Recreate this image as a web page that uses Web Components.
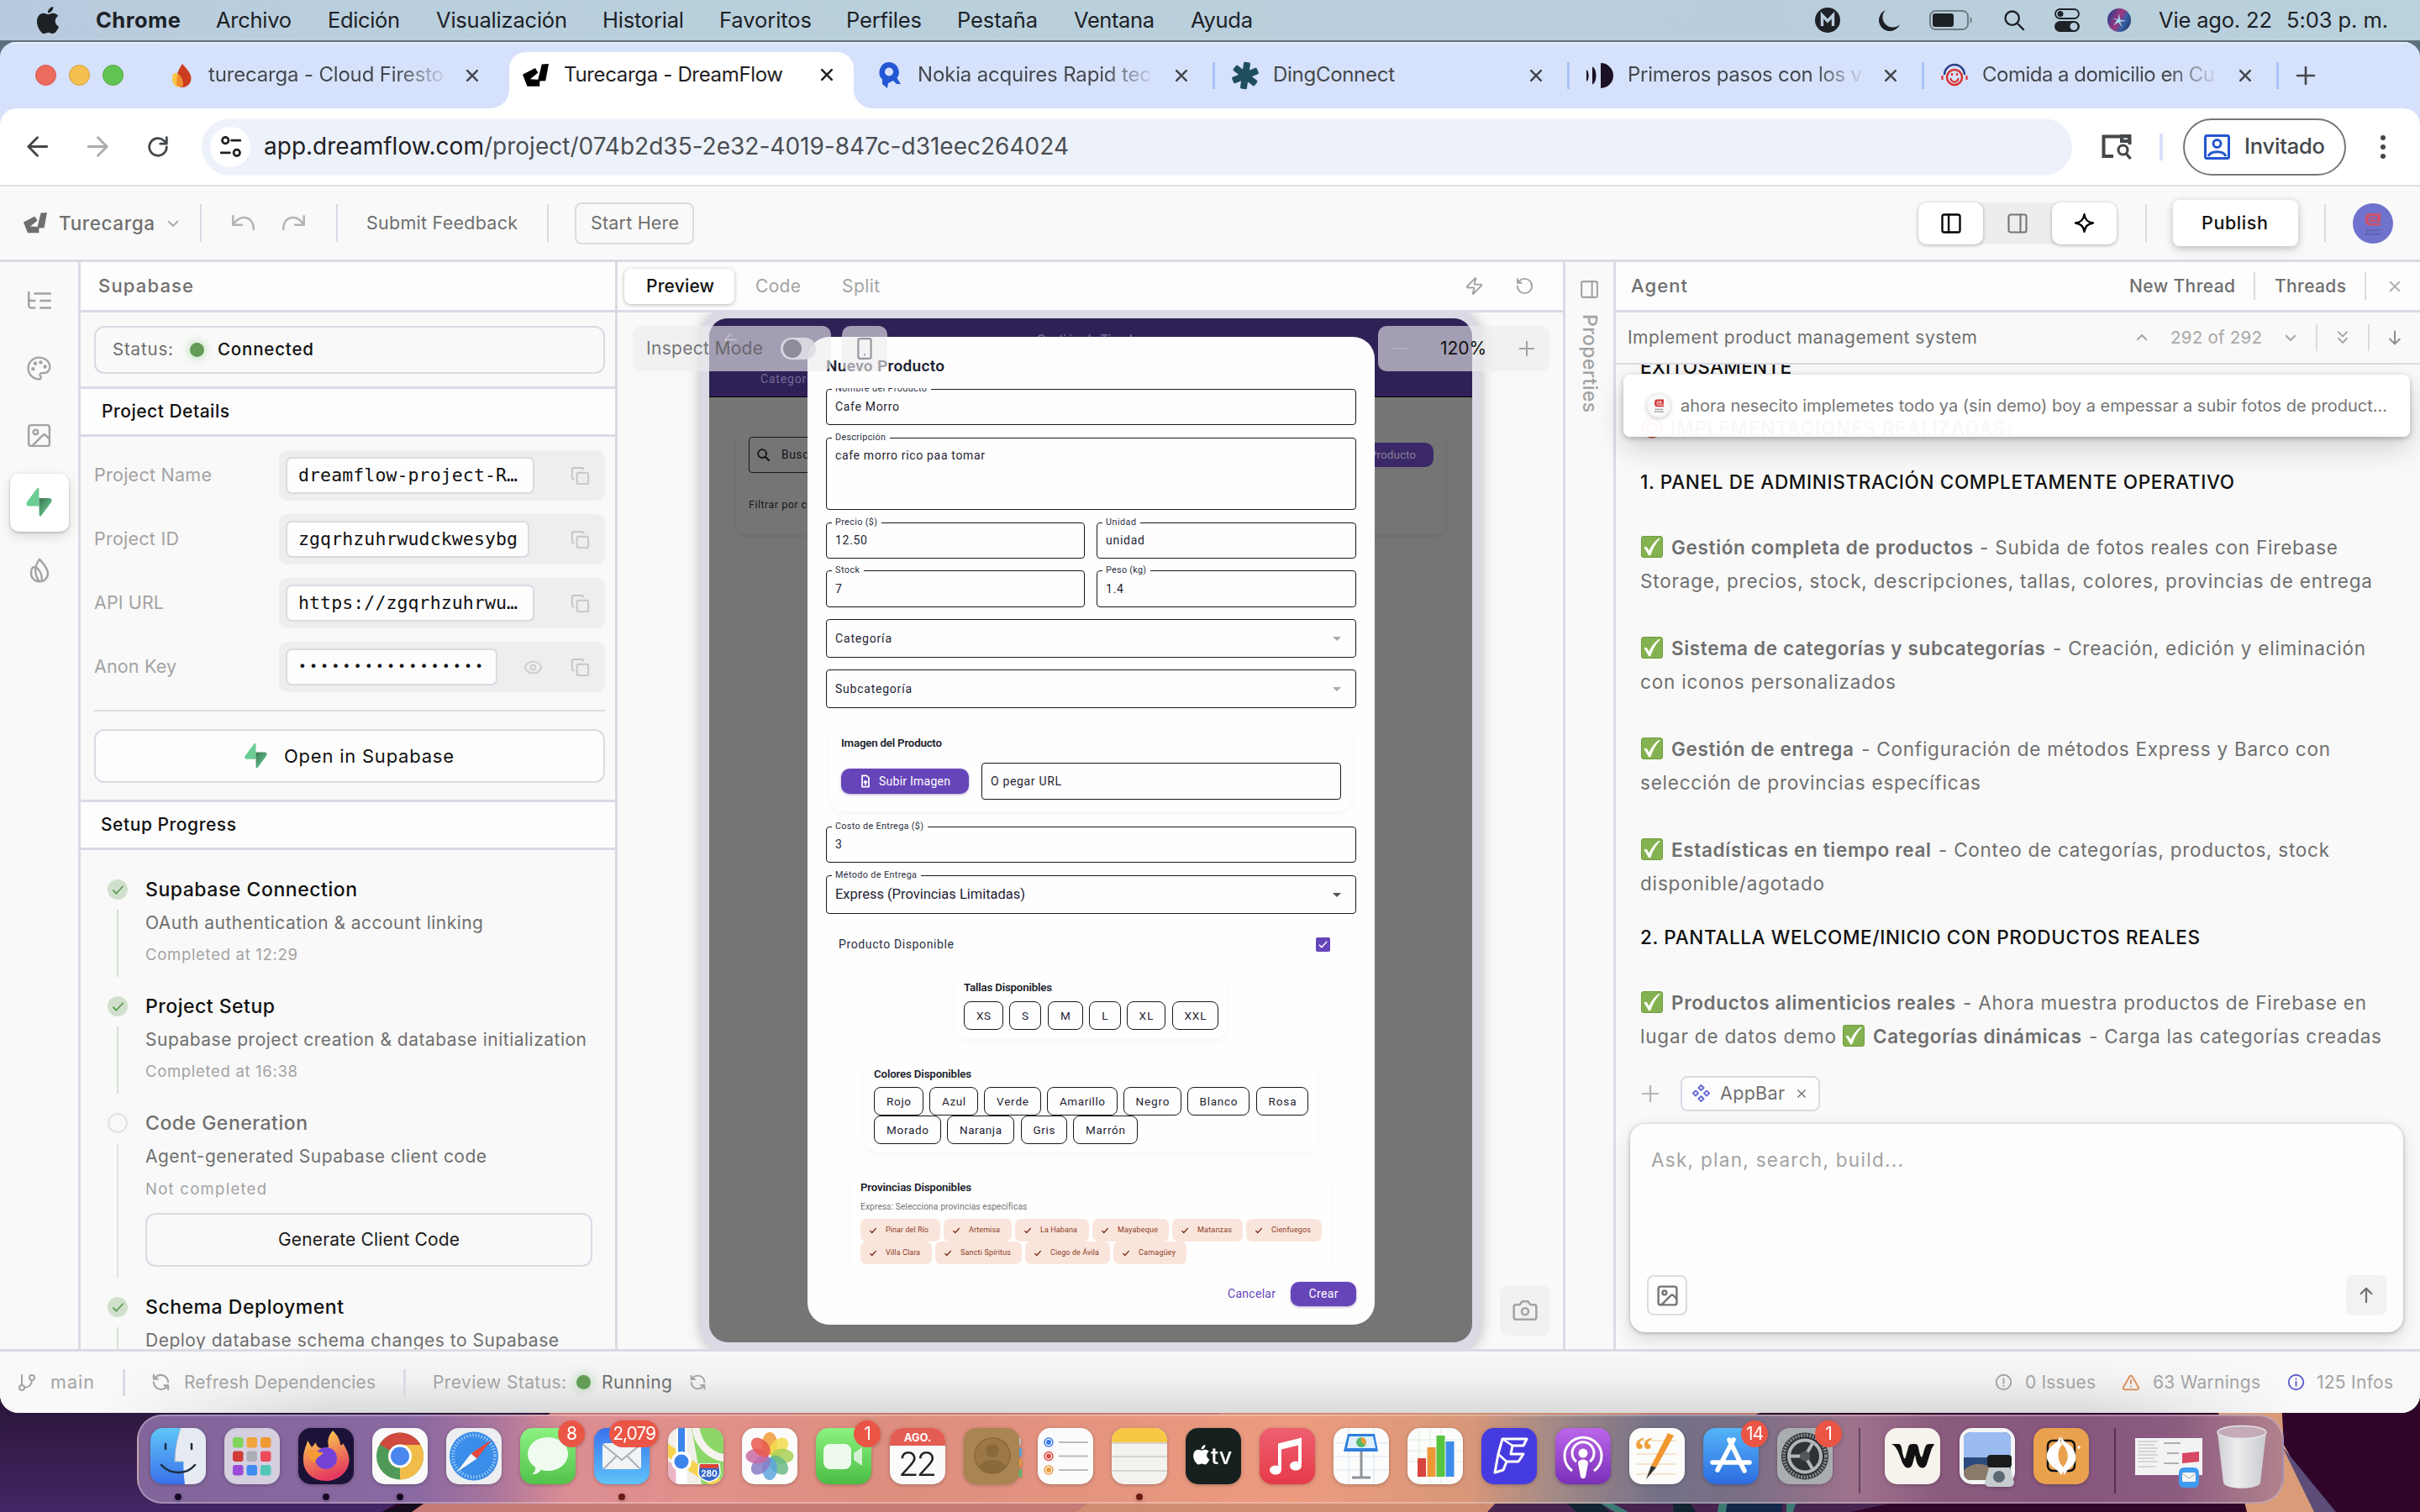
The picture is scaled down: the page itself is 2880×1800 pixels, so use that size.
<!DOCTYPE html>
<html lang="es">
<head>
<meta charset="utf-8">
<title>Turecarga - DreamFlow</title>
<style>
html,body{margin:0;padding:0}
body{width:2880px;height:1800px;overflow:hidden;font-family:Inter,"Liberation Sans",sans-serif;background:#2a1239}
</style>
</head>
<body>
<mac-desktop></mac-desktop>
<script>
const BASE = `:host,*{box-sizing:border-box}
.row{display:flex;flex-direction:row;align-items:center;width:100%;flex:none}
.col{display:flex;flex-direction:column;flex:none}
.cell{display:flex;align-items:center;flex:none}
.box{display:flex;align-items:center;width:100%;flex:none}
.dot{border-radius:50%;flex:none}
.vl{width:2px;background:#dbdae4;flex:none}
svg{display:block;flex:none;overflow:visible}`;

/* Layout helpers: cells flow along one axis, each margin is the gap from the previous cell. */
const R = (x0, items, st = '') => {
  let c = x0;
  return `<div class="row" style="${st}">` + items.map(([x, w, h]) => {
    const m = x - c; c = x + w;
    return `<div class="cell" style="margin-left:${m}px;width:${w}px">${h}</div>`;
  }).join('') + '</div>';
};
const C = (y0, items, st = '') => {
  let c = y0;
  return `<div class="col" style="${st}">` + items.map(([y, h, b]) => {
    const m = y - c; c = y + h;
    return `<div class="cell" style="margin-top:${m}px;height:${h}px">${b}</div>`;
  }).join('') + '</div>';
};
const text = (w, t, size, color, weight = 400, extra = '') =>
  `<ui-text w="${w}" size="${size}" color="${color}" weight="${weight}" ${extra}>${t}</ui-text>`;
const T = (x, x2, t, size, color, weight, extra) => [x, x2 - x, text(x2 - x, t, size, color, weight, extra)];
const I = (cx, size, name, color, sw = 2) => [cx - size / 2, size, `<ui-icon name="${name}" size="${size}" color="${color}" sw="${sw}"></ui-icon>`];
const V = (x, h, w = 2, color = '#dbdae4') => [x, w, `<div class="vl" style="height:${h}px;width:${w}px;background:${color}"></div>`];
const Y = (cy, h, b) => [cy - h / 2, h, b];

const ICONS = {
  tree: '<path d="M21 12h-8M21 6H8M21 18h-8M3 6v4c0 1.1.9 2 2 2h3M3 10v6c0 1.1.9 2 2 2h3M3 5v1"/>',
  palette: '<circle cx="13.5" cy="6.5" r=".8"/><circle cx="17.5" cy="10.5" r=".8"/><circle cx="8.5" cy="7.5" r=".8"/><circle cx="6.5" cy="12.5" r=".8"/><path d="M12 2C6.5 2 2 6.5 2 12s4.5 10 10 10c.93 0 1.65-.75 1.65-1.69 0-.44-.18-.83-.44-1.12-.29-.29-.44-.65-.44-1.13a1.64 1.64 0 0 1 1.67-1.67h2c3.05 0 5.55-2.5 5.55-5.55C21.97 6.01 17.46 2 12 2z"/>',
  image: '<rect x="3" y="3" width="18" height="18" rx="2"/><circle cx="9" cy="9" r="2"/><path d="m21 15-3.09-3.09a2 2 0 0 0-2.82 0L6 21"/>',
  fire: '<path d="M12 2c-2 3-4 7-3.600 11 .3 4 2 7 3.600 9M12 2c2.500 3 7.500 8 7.500 13a7.500 7 0 0 1-15 0c0-3.500 1.200-6 3-6 2.500 0 7 5 6.500 11"/>',
  copy: '<rect x="8" y="8" width="14" height="14" rx="2"/><path d="M4 16c-1.100 0-2-.9-2-2V4c0-1.100.9-2 2-2h10c1.100 0 2 .9 2 2"/>',
  eye: '<path d="M2 12.300a1 1 0 0 1 0-.6 10.700 10.700 0 0 1 20 0 1 1 0 0 1 0 .6 10.700 10.700 0 0 1-20 0"/><circle cx="12" cy="12" r="3"/>',
  branch: '<path d="M6 3v12"/><circle cx="18" cy="6" r="3"/><circle cx="6" cy="18" r="3"/><path d="M18 9a9 9 0 0 1-9 9"/>',
  refresh: '<path d="M3 12a9 9 0 0 1 9-9 9.750 9.750 0 0 1 6.740 2.740L21 8M21 3v5h-5M21 12a9 9 0 0 1-9 9 9.750 9.750 0 0 1-6.740-2.740L3 16M8 16H3v5" transform="translate(24 0) scale(-1 1)"/>',
  zap: '<path d="M4 14a1 1 0 0 1-.78-1.630l9.900-10.200a.5.5 0 0 1 .86.460l-1.920 6.020A1 1 0 0 0 13 10h7a1 1 0 0 1 .78 1.630l-9.900 10.200a.5.5 0 0 1-.86-.460l1.920-6.020A1 1 0 0 0 11 14z"/>',
  rotate: '<path d="M3 12a9 9 0 1 0 9-9 9.750 9.750 0 0 0-6.740 2.740L3 8M3 3v5h5"/>',
  camera: '<path d="M14.500 4h-5L7 7H4a2 2 0 0 0-2 2v9a2 2 0 0 0 2 2h16a2 2 0 0 0 2-2V9a2 2 0 0 0-2-2h-3z"/><circle cx="12" cy="13" r="3"/>',
  down: '<path d="m5 9 7 7 7-7"/>', up: '<path d="m5 15 7-7 7 7"/>',
  dbl: '<path d="m6 4 6 6 6-6M6 13l6 6 6-6"/>',
  arrowdown: '<path d="M12 3v18M19 14l-7 7-7-7"/>', arrowup: '<path d="M12 21V3M5 10l7-7 7 7"/>',
  x: '<path d="M19 5 5 19M5 5l14 14"/>', plus: '<path d="M2 12h20M12 2v20"/>', minus: '<path d="M2 12h20"/>',
  undo: '<path d="M2 4.500v9h9M2.500 13c3-5 7-7.500 11.500-7 5.500.6 9 5 9 12"/>',
  redo: '<path d="M22 4.500v9h-9M21.500 13c-3-5-7-7.500-11.500-7-5.500.6-9 5-9 12"/>',
  pleft: '<rect x="3" y="3" width="18" height="18" rx="2"/><path d="M9.500 3v18"/>',
  pright: '<rect x="3" y="3" width="18" height="18" rx="2"/><path d="M15 3v18"/>',
  spark: '<path d="M12 2c.8 6 3.500 9.200 10 10-6.500.8-9.200 4-10 10-.8-6-3.500-9.200-10-10 6.500-.8 9.200-4 10-10z"/>',
  alert: '<circle cx="12" cy="12" r="10"/><path d="M12 7v6M12 16.500v.5"/>',
  info: '<circle cx="12" cy="12" r="10"/><path d="M12 17v-6M12 7.500v.3"/>',
  warn: '<path d="m21.700 18-8-14a2 2 0 0 0-3.500 0l-8 14A2 2 0 0 0 4 21h16a2 2 0 0 0 1.700-3M12 9v4M12 17v.3"/>',
  comp: '<path d="m12 2 3.200 3.200L12 8.400 8.800 5.200zM12 15.600l3.200 3.200L12 22l-3.200-3.200zM5.200 8.800 8.400 12l-3.200 3.200L2 12zM18.800 8.800 22 12l-3.200 3.200-3.200-3.200z"/>',
  phone: '<rect x="5" y="1" width="14" height="22" rx="2"/><path d="M12 18.500v.2"/>',
  search: '<circle cx="10" cy="10" r="7"/><path d="m15.500 15.500 6 6"/>',
  back: '<path d="M22 12H3M12 2.500 2.500 12l9.500 9.500"/>', fwd: '<path d="M2 12h19M12 2.500l9.500 9.500-9.500 9.500"/>',
  reload: '<path d="M21.500 12a9.500 9.500 0 1 1-3-7l3 3M21.500 1.500v7h-7"/>',
  check: '<path d="m4 13 5 5L20 6"/>',
  file: '<path d="M14 2H6v20h12V6zM12 18v-6M9.500 14l2.500-2.500 2.500 2.500"/>',
  tune: '<circle cx="6" cy="5" r="3.600"/><path d="M13 5h10M1 19h10"/><circle cx="19" cy="19" r="3.600"/>'
};
const APPLE = 'M12.152 6.896c-.948 0-2.415-1.078-3.960-1.040-2.040.027-3.910 1.183-4.961 3.014-2.117 3.675-.546 9.103 1.519 12.090 1.013 1.454 2.208 3.090 3.792 3.039 1.520-.065 2.090-.987 3.935-.987 1.831 0 2.350.987 3.960.948 1.637-.026 2.676-1.480 3.676-2.948 1.156-1.688 1.636-3.325 1.662-3.415-.039-.013-3.182-1.221-3.220-4.857-.026-3.040 2.480-4.494 2.597-4.559-1.429-2.090-3.623-2.324-4.390-2.376-2-.156-3.675 1.090-4.610 1.090zM15.530 3.830c.843-1.012 1.400-2.427 1.245-3.830-1.207.052-2.662.805-3.532 1.818-.78.896-1.454 2.338-1.273 3.714 1.338.104 2.715-.688 3.559-1.701';
const dream = (w, color) => `<svg width="${w}" height="${w * 27 / 31.3}" viewBox="0 0 31.3 27"><path fill="${color}" d="M0 13 15 5l3.500 5.500-9.500 8 9.500.5L23 .5 31.300 0l-3.800 20.500-7 .3V27h-15z"/></svg>`;
const bolt = s => `<svg width="${s}" height="${s * 1.08}" viewBox="0 0 24 24" preserveAspectRatio="none"><defs><linearGradient id="g" x1=".2" y1="0" x2=".8" y2=".7"><stop offset="0" stop-color="#3f7d5a"/><stop offset="1" stop-color="#65c18a"/></linearGradient></defs><path fill="#6bcd93" d="M11.900 1.036c-.015-.986-1.260-1.410-1.874-.637L.764 12.050C-.33 13.427.65 15.455 2.409 15.455h9.579V1z"/><path fill="url(#g)" d="M12 8.545v7l.113 7.420c.014.985 1.259 1.408 1.873.636l9.262-11.653c1.093-1.375.113-3.403-1.645-3.403z"/></svg>`;
const okBox = `<svg width="26" height="26" viewBox="0 0 26 26"><rect x=".5" y=".5" width="25" height="25" rx="2.500" fill="#85b250" stroke="#6f9c3e"/><path d="M3.500 13.500c1-1 2.500-1 3.500 0l2.500 4C12.500 11 16 6.500 21 3h2C17.500 8.500 14 15 11.500 22.500c-.6 1.200-2 1.200-2.600.3z" fill="#fff"/></svg>`;
const brand = (s, red, inner, ink) => `<svg width="${s}" height="${s * 1.25}" viewBox="0 0 24 30"><path d="M8 1h14v16H8a6 6 0 0 1-6-6V7a6 6 0 0 1 6-6z" fill="${red}"/><path d="M22 13H9.500a2 2 0 0 1-2-2V7.500a2 2 0 0 1 2-2h7V9H11" fill="none" stroke="${inner}" stroke-width="1.600"/><path d="M3 23h18M2 28h20" stroke="${ink}" stroke-width="2.400" stroke-dasharray="3 1 2 1"/></svg>`;

const define = (name, render) => customElements.define(name, class extends HTMLElement {
  connectedCallback() {
    if (this.shadowRoot) return;
    this.attachShadow({ mode: 'open' }).innerHTML = render(this);
  }
});
const a = (el, k) => el.getAttribute(k);

/* Text that tracks its letters out to a given line width. */
customElements.define('ui-text', class extends HTMLElement {
  connectedCallback() {
    if (this.shadowRoot) return;
    this.attachShadow({ mode: 'open' }).innerHTML = `<style>:host{display:inline-block;white-space:pre;line-height:1.2;flex:none}</style><slot></slot>`;
    const s = this.style;
    s.fontSize = a(this, 'size') + 'px'; s.color = a(this, 'color'); s.fontWeight = a(this, 'weight');
    if (a(this, 'font')) s.fontFamily = a(this, 'font');
    const w = +a(this, 'w');
    if (w) {
      const nat = this.getBoundingClientRect().width, n = this.textContent.length;
      if (n > 1) s.letterSpacing = ((w - nat) / (n - 1)).toFixed(3) + 'px';
      s.width = w + 'px';
    }
  }
});
define('ui-icon', el => `<style>:host{display:inline-flex;flex:none}svg{display:block}</style>
<svg width="${a(el, 'size')}" height="${a(el, 'size')}" viewBox="0 0 24 24" fill="none" stroke="${a(el, 'color')}" stroke-width="${a(el, 'sw') || 2}" stroke-linecap="round" stroke-linejoin="round">${ICONS[a(el, 'name')]}</svg>`);

/* ---------- macOS menu bar ---------- */
define('mac-menubar', () => {
  const k = '#1d2126', m = (x, x2, t, w = 400) => T(x, x2, t, 25.5, k, w);
  return `<style>${BASE}:host{display:flex;height:48px;flex:none;background:linear-gradient(90deg,#b8cade,#b9cfdd 14%,#b9d0dc 45%,#bacddd 72%,#b9d2dc)}</style>` +
  R(0, [
    [43, 28, `<svg width="28" height="32" viewBox="2 0 20 24"><path fill="${k}" d="${APPLE}"/></svg>`],
    m(114, 215, 'Chrome', 700), m(257, 347, 'Archivo'), m(390, 476, 'Edición'), m(519, 675, 'Visualización'), m(717, 814, 'Historial'),
    m(856, 966, 'Favoritos'), m(1007, 1097, 'Perfiles'), m(1139, 1235, 'Pestaña'), m(1278, 1374, 'Ventana'), m(1417, 1491, 'Ayuda'),
    [2160, 30, `<svg width="30" height="30" viewBox="0 0 30 30"><circle cx="15" cy="15" r="15" fill="${k}"/><path d="M8.500 22V9l6.500 7 6.500-7v13" fill="none" stroke="#b9cddd" stroke-width="3.400"/></svg>`],
    [2236, 26, `<svg width="26" height="26" viewBox="0 0 26 26"><path fill="${k}" d="M8 1A13 13 0 1 0 25 18 12 12 0 0 1 8 1z"/></svg>`],
    [2296, 52, `<svg width="52" height="24" viewBox="0 0 52 24"><rect x="1" y="1" width="45" height="22" rx="6.500" fill="none" stroke="#6c7c86" stroke-width="2"/><rect x="4" y="4" width="25" height="16" rx="3" fill="${k}"/><path d="M48.500 8c3 1.500 3 6.500 0 8z" fill="#6c7c86"/></svg>`],
    [2383, 26, `<ui-icon name="search" size="28" color="${k}" sw="2"></ui-icon>`],
    [2445, 30, `<svg width="30" height="28" viewBox="0 0 30 28"><rect x="1" y="1" width="28" height="11" rx="5.500" fill="none" stroke="${k}" stroke-width="1.800"/><circle cx="7" cy="6.500" r="3.500" fill="${k}"/><rect x="0" y="15" width="30" height="13" rx="6.500" fill="${k}"/><circle cx="23" cy="21.500" r="4.500" fill="#b9cddd"/></svg>`],
    [2508, 28, `<svg width="28" height="28" viewBox="0 0 28 28"><defs><linearGradient id="s" x1="0" y1=".3" x2="1" y2=".8"><stop offset="0" stop-color="#2f3f87"/><stop offset=".45" stop-color="#a1357f"/><stop offset=".7" stop-color="#2f5fa6"/><stop offset="1" stop-color="#2b2f5c"/></linearGradient></defs><circle cx="14" cy="14" r="14" fill="url(#s)"/><path d="M14 6l1 7.500 8 1.500-8 .8L18 23l-5-6.500-6 4 4.500-6.500L5 11.500l7.500 1.500z" fill="#9fe6ee"/></svg>`],
    m(2569, 2704, 'Vie ago. 22'), m(2721, 2842, '5:03 p. m.')
  ]);
});

/* ---------- Browser chrome ---------- */
define('browser-tabs', () => {
  const t = (x, x2, s, fade, col = '#45484c') => [x, x2 - x, `<div style="${fade ? `-webkit-mask-image:linear-gradient(90deg,#000 ${x2 - x - 56}px,rgba(0,0,0,.1) 100%)` : ''}">${text(x2 - x, s, 24, col)}</div>`];
  const close = cx => I(cx, 20, 'x', '#45484c', 3);
  const div = x => V(x, 32, 3, '#a8c3f5');
  const light = (x, c, b) => [x, 25, `<div class="dot" style="width:25px;height:25px;background:${c};border:1px solid ${b}"></div>`];
  return `<style>${BASE}:host{display:flex;height:79px;flex:none;background:#d6e1fb;border-top:2px solid #e9effc;align-items:flex-end}
  .row{height:79px;margin-bottom:0}
  .active{position:relative;width:410px;height:67px;background:#fff;border-radius:20px 20px 0 0;display:flex;align-items:center;margin-top:12px}
  .active::before,.active::after{content:"";position:absolute;bottom:0;width:22px;height:22px}
  .active::before{left:-22px;background:radial-gradient(circle at 0 0,transparent 21.500px,#fff 22px)}
  .active::after{right:-22px;background:radial-gradient(circle at 100% 0,transparent 21.500px,#fff 22px)}
  .active .row{height:auto;margin-top:-12px}</style>` +
  R(0, [
    light(42, '#ec6a5e', '#d5574b'), light(82, '#f4bf4f', '#d8a23c'), light(122, '#61c554', '#4fa73f'),
    [205, 22, `<svg width="23" height="28" viewBox="0 0 23 28"><path d="M12 0c5 6 10.500 11 10.500 17.500A10.500 10.500 0 0 1 6 26C3 14 8 6 12 0z" fill="#cb3d1e"/><path d="M2.500 11c6 0 11 6 10 15.500C6 30 0 25 0 18c0-3 1-5.500 2.500-7z" fill="#f9c440"/><path d="M6.500 12c4 2.500 6.500 8 6 14.500-2 .8-5 .6-7-1C5 20 5.300 16 6.500 12z" fill="#ee8d33"/></svg>`],
    t(248, 528, 'turecarga - Cloud Firesto', 1), close(562),
    [606, 410, `<div class="active">${R(606, [[622, 31, dream(31, '#000')], t(671, 932, 'Turecarga - DreamFlow', 0, '#1f2023'), I(984, 20, 'x', '#1f2023', 3)])}</div>`],
    [1045, 27, `<svg width="27" height="31" viewBox="0 0 27 31"><path fill-rule="evenodd" fill="#2358d5" d="M13 0a12 12 0 0 0-8 20.500V26l6 5 1-6 6-3 4 4h5l-4.500-7A12 12 0 0 0 13 0zm0 6.500a5 5 0 1 1 0 10 5 5 0 0 1 0-10z"/></svg>`],
    t(1092, 1370, 'Nokia acquires Rapid tec', 1), close(1406), div(1443),
    [1466, 32, `<svg width="32" height="32" viewBox="-16 -16 32 32" fill="#1f4e5c">${[0, 60, 120].map(r => `<rect x="-4" y="-16" width="8" height="32" rx="1.500" transform="rotate(${r + 8})"/>`).join('')}</svg>`],
    t(1515, 1660, 'DingConnect', 0), close(1828), div(1865),
    [1888, 32, `<svg width="32" height="30" viewBox="0 0 32 30" fill="#1a1124"><path d="M17 0a15 15 0 0 1 0 30zM7 4.500c6 2 6 19 0 21zM0 8c3.500 1.500 3.500 12.500 0 14z"/></svg>`],
    t(1937, 2216, 'Primeros pasos con los v', 1), close(2250), div(2287),
    [2310, 32, `<svg width="32" height="28" viewBox="0 0 32 28" fill="none"><path d="M4 13a12 12 0 0 1 24 0" stroke="#2b3f86" stroke-width="2.500"/><circle cx="16" cy="16" r="9" stroke="#d8322c" stroke-width="2.500"/><path d="M11.500 17a4.500 4.500 0 0 0 9 0M13 11v3M19 11v3M1.500 14v5M30.500 14v5" stroke="#d8322c" stroke-width="2.200"/></svg>`],
    t(2359, 2636, 'Comida a domicilio en Cu', 1), close(2672), div(2709), I(2744, 24, 'plus', '#45484c', 2.6)
  ]);
});

define('browser-toolbar', () => `<style>${BASE}:host{display:flex;height:93px;flex:none;background:#fff;border-radius:20px 20px 0 0;border-bottom:2px solid #e0e0e0;align-items:center}
.omni{width:2226px;height:68px;border-radius:34px;background:#edf2fa;display:flex;align-items:center}
.site{width:48px;height:48px;border-radius:50%;background:#fff;display:flex;align-items:center;justify-content:center}
.pill{width:194px;height:68px;border-radius:34px;border:2px solid #74777a;display:flex;align-items:center}</style>` +
  R(0, [
    I(44, 27, 'back', '#45484b', 2.6), I(116, 27, 'fwd', '#adadad', 2.6), I(188, 26, 'reload', '#45484b', 2.6),
    [240, 2226, `<div class="omni">${R(240, [[250, 48, `<div class="site"><ui-icon name="tune" size="25" color="#1f2023" sw="2.6"></ui-icon></div>`],
      [314, 958, text(958, 'app.dreamflow.com<span style="color:#4a4d52">/project/074b2d35-2e32-4019-847c-d31eec264024</span>', 28, '#1f2023')]])}</div>`],
    [2501, 36, `<svg width="36" height="30" viewBox="0 0 36 30"><path d="M14 26H2.500V2.500h31V12M24 2h9v6h-9z" fill="none" stroke="#45484b" stroke-width="4"/><circle cx="25.500" cy="18.500" r="5.500" fill="#fff" stroke="#45484b" stroke-width="3.200"/><path d="m29.500 23 5 6" stroke="#45484b" stroke-width="3.500"/></svg>`],
    V(2570, 32, 4, '#d6e1fb'),
    [2598, 194, `<div class="pill">${R(2600, [
      [2623, 31, `<svg width="31" height="30" viewBox="0 0 31 30" fill="none" stroke="#2356cf" stroke-width="3"><rect x="1.500" y="1.500" width="28" height="27" rx="2"/><circle cx="15.500" cy="11" r="4.500"/><path d="M5 26c3-7 18-7 21 0"/></svg>`],
      T(2671, 2767, 'Invitado', 25.5, '#45484b', 500)])}</div>`],
    [2833, 6, `<svg width="6" height="28" viewBox="0 0 6 28" fill="#45484b"><circle cx="3" cy="3" r="3"/><circle cx="3" cy="14" r="3"/><circle cx="3" cy="25" r="3"/></svg>`]
  ]));

/* ---------- DreamFlow top bar ---------- */
define('flow-toolbar', () => `<style>${BASE}:host{display:flex;height:90px;flex:none;background:#f9f9f9;border-bottom:3px solid #dbdae4;align-items:center}
.start{width:142px;height:50px;border:2px solid #dcdce0;border-radius:8px;display:flex;align-items:center}
.seg{width:236px;height:50px;border-radius:10px;background:#ededed;display:flex;justify-content:space-between}
.seg div{width:77px;height:50px;border-radius:10px;display:flex;align-items:center;justify-content:center}
.seg .on{background:#fff;box-shadow:0 1px 4px rgba(0,0,0,.3)}
.pub{width:149px;height:55px;border-radius:8px;background:#fff;box-shadow:0 2px 8px rgba(0,0,0,.22),0 8px 16px rgba(0,0,0,.05);display:flex;align-items:center}
.av{width:48px;height:48px;border-radius:50%;background:#7073cd;display:flex;align-items:center;justify-content:center;padding-top:2px}</style>` +
  R(0, [
    [28, 28, dream(28, '#6f6f6f')], T(70, 184, 'Turecarga', 22.5, '#6f6f6f', 500), I(206, 18, 'down', '#a8a8a8', 2.4), V(238, 45),
    I(289, 28, 'undo', '#b4b4b4', 2.2), I(350, 28, 'redo', '#b4b4b4', 2.2), V(400, 45), T(436, 616, 'Submit Feedback', 21.5, '#6f6f6f'), V(651, 45),
    [684, 142, `<div class="start">${R(686, [T(703, 808, 'Start Here', 21.5, '#6f6f6f')])}</div>`],
    [2283, 236, `<div class="seg"><div class="on"><ui-icon name="pleft" size="28" color="#000"></ui-icon></div><div><ui-icon name="pright" size="28" color="#757575" sw="1.8"></ui-icon></div><div class="on"><ui-icon name="spark" size="25" color="#000" sw="2.2"></ui-icon></div></div>`],
    V(2553, 45), [2586, 149, `<div class="pub">${R(2586, [T(2620, 2699, 'Publish', 21.5, '#111', 500)])}</div>`], V(2766, 45),
    [2800, 48, `<div class="av">${brand(22, '#c9536b', '#7073cd', '#5a5cab')}</div>`]
  ]));

/* ---------- Icon rail ---------- */
define('icon-rail', () => {
  const ic = (n, s = 30) => `<ui-icon name="${n}" size="${s}" color="#a3a3a3" sw="1.8"></ui-icon>`;
  return `<style>${BASE}:host{display:flex;width:96px;flex:none;border-right:3px solid #dbdae4;background:#f9f9f9}
  .col{width:93px;align-items:center}.cell{justify-content:center;width:93px}
  .sel{width:70px;height:69px;border-radius:10px;background:#fff;box-shadow:0 1px 3px rgba(0,0,0,.25),0 5px 14px rgba(0,0,0,.12);display:flex;align-items:center;justify-content:center}</style>` +
  C(312, [Y(358, 32, ic('tree', 34)), Y(438, 32, ic('palette', 31)), Y(518, 32, ic('image', 33)), Y(598, 69, `<div class="sel">${bolt(31)}</div>`), Y(679, 32, ic('fire', 32))]);
});

/* ---------- Supabase panel ---------- */
define('detail-row', el => {
  const w = +a(el, 'w'), secret = el.hasAttribute('secret'), tw = +a(el, 'tw');
  return `<style>${BASE}:host{display:flex;width:100%}
  .val{width:388px;height:60px;border-radius:10px;background:#eeeeee;display:flex;align-items:center}
  .in{width:${w}px;height:44px;border:2px solid #dbdae4;border-radius:7px;background:#fdfdfd;display:flex;align-items:center}</style>` +
  R(96, [T(112, 112 + +a(el, 'lw'), a(el, 'label'), 21.5, '#a3a3a3'),
    [332, 388, `<div class="val">${R(332, [[340, w, `<div class="in">${R(342, [[355, tw, text(tw, a(el, 'value'), secret ? 16 : 21.5, '#111', 400, `font='"DejaVu Sans Mono",monospace'`)]])}</div>`],
      ...(secret ? [I(634, 23, 'eye', '#cccccc')] : []), I(690, 23, 'copy', '#c6c6c6')])}</div>`]]);
});
define('setup-step', el => {
  const done = el.hasAttribute('done');
  return `<style>${BASE}:host{display:flex;width:100%;flex:none}
  .mark{width:24px;height:24px;border-radius:50%;display:flex;align-items:center;justify-content:center;${done ? 'background:#d1e0cd' : 'border:2px solid #e2e2e4'}}
  .line{width:2px;height:${a(el, 'line')}px;margin:12px 0 0 11px;background:${done ? '#d1e0cd' : '#e2e2e4'}}</style>
  <div class="col" style="margin-left:32px;width:45px"><div class="mark">${done ? '<ui-icon name="check" size="17" color="#5c9c50" sw="2.6"></ui-icon>' : ''}</div><div class="line"></div></div>
  <div class="col" style="height:${a(el, 'h')}px">${C(-12, JSON.parse(el.querySelector('script').textContent).map(([cy, w, t, s, c, wt]) => Y(cy, 30, text(w, t, s, c, wt))))}<slot></slot></div>`;
});
define('supabase-panel', () => {
  const step = (h, line, done, lines, extra = '') => `<setup-step h="${h}" line="${line}" ${done ? 'done' : ''}><script type="application/json">${JSON.stringify(lines)}<\/script>${extra}</setup-step>`;
  const g1 = '#6f6f6f', g2 = '#a3a3a3';
  return `<style>${BASE}:host{display:flex;flex-direction:column;width:639px;flex:none;border-right:3px solid #dbdae4;background:#f9f9f9;height:1294px;overflow:hidden}
  .h{background:#fdfdfd;display:flex;align-items:center;width:100%;flex:none}
  .st{width:608px;height:57px;border:2px solid #dbdae4;border-radius:12px;display:flex;align-items:center}
  .open{width:608px;height:64px;border:2px solid #dbdae4;border-radius:12px;background:#fdfdfd;display:flex;align-items:center}
  .gen{width:532px;height:64px;border:2px solid #dbdae4;border-radius:12px;display:flex;align-items:center;justify-content:center;margin-top:14px;flex:none}
  .ok{width:17px;height:17px;background:#629c57;box-shadow:0 0 10px 3px rgba(120,190,110,.3)}</style>
  <div class="h" style="height:60px;border-bottom:3px solid #dbdae4">${R(96, [T(117, 230, 'Supabase', 22, g1, 500)])}</div>
  <div style="height:91px;padding:16px 0 0 16px;border-bottom:3px solid #dbdae4;flex:none"><div class="st">${R(114, [T(134, 206, 'Status:', 20.5, g1), [226, 17, '<div class="dot ok"></div>'], T(259, 373, 'Connected', 20.5, '#111', 500)])}</div></div>
  <div class="h" style="height:57px;border-bottom:3px solid #dbdae4">${R(96, [T(121, 273, 'Project Details', 21, '#111', 500)])}</div>
  ${C(520, [
    [536, 60, '<detail-row label="Project Name" lw="140" w="296" tw="261" value="dreamflow-project-R…"></detail-row>'],
    [612, 60, '<detail-row label="Project ID" lw="101" w="290" tw="261" value="zgqrhzuhrwudckwesybg"></detail-row>'],
    [688, 60, '<detail-row label="API URL" lw="83" w="296" tw="261" value="https://zgqrhzuhrwu…"></detail-row>'],
    [764, 60, '<detail-row label="Anon Key" lw="98" w="252" tw="220" secret value="•••••••••••••••••"></detail-row>'],
    [845, 2, '<div style="width:608px;height:2px;background:#dbdae4;margin-left:16px"></div>'],
    [868, 64, `<div style="margin-left:16px" class="open">${R(114, [[291, 28, bolt(27)], T(338, 540, 'Open in Supabase', 22, '#111')])}</div>`],
    [952, 60, `<div class="h" style="width:636px;height:60px;border-top:3px solid #dbdae4;border-bottom:3px solid #dbdae4">${R(96, [T(120, 281, 'Setup Progress', 21, '#111', 500)])}</div>`]
  ])}
  <div class="col" style="padding-top:35px">
  ${step(139, 80, 1, [[1, 252, 'Supabase Connection', 23, '#111', 500], [40, 402, 'OAuth authentication &amp; account linking', 21, g1, 400], [77, 181, 'Completed at 12:29', 18.5, g2, 400]])}
  ${step(139, 80, 1, [[1, 154, 'Project Setup', 23, '#111', 500], [40, 525, 'Supabase project creation &amp; database initialization', 21, g1, 400], [77, 181, 'Completed at 16:38', 18.5, g2, 400]])}
  ${step(219, 160, 0, [[1, 193, 'Code Generation', 23, g1, 500], [40, 406, 'Agent-generated Supabase client code', 21, g1, 400], [78, 144, 'Not completed', 18.5, g2, 400]], `<div class="gen">${text(216, 'Generate Client Code', 21, '#1a1a1a')}</div>`)}
  ${step(139, 80, 1, [[1, 236, 'Schema Deployment', 23, '#111', 500], [40, 492, 'Deploy database schema changes to Supabase', 21, g1, 400]])}
  </div>`;
});

/* ---------- Previewed app ---------- */
define('form-field', el => {
  const lab = a(el, 'label'), v = a(el, 'value'), arrow = a(el, 'arrow');
  return `<style>${BASE}:host{display:flex;position:relative;flex:none;width:${a(el, 'w')}px;height:${a(el, 'h')}px;border:1.500px solid #17181c;border-radius:4px;padding:${a(el, 'top') || 0}px 0 0 10px;align-items:${el.hasAttribute('area') ? 'flex-start' : 'center'};font-family:Roboto,sans-serif}
  .lab{position:absolute;top:-8px;left:6px;height:14px;background:#fefefe;padding:0 5px 0 4px;display:flex;align-items:center}
  .arr{margin-left:auto;margin-right:17px;border:5px solid transparent;border-top-color:${arrow};border-bottom:0}</style>
  ${lab ? `<div class="lab">${text(a(el, 'lw'), lab, 10.8, '#2a2e3f')}</div>` : ''}${text(a(el, 'vw'), v, a(el, 'size') || 14, '#1f2333')}${arrow ? '<div class="arr"></div>' : ''}`;
});
define('product-dialog', () => {
  const ff = (w, h, l, lw, v, vw, o = '') => `<form-field w="${w}" h="${h}" ${l ? `label="${l}" lw="${lw}"` : ''} value="${v}" vw="${vw}" ${o}></form-field>`;
  const chip = (x, x2, t, tw) => [x, x2 - x, `<div class="chip" style="width:${x2 - x}px">${text(tw, t, 13.5, '#1f2333')}</div>`];
  const pv = (x, x2, t, tw) => [x, x2 - x, `<div class="pv" style="width:${x2 - x}px"><ui-icon name="check" size="10" color="#7c2d16" sw="3"></ui-icon>${text(tw, t, 9, '#8a3a22')}</div>`];
  const at = (x, h) => `<div style="margin-left:${x - 961}px;display:flex">${h}</div>`;
  const title = (w, t) => text(w, t, 13.3, '#1a1d2b', 600);
  const card = (x, w, h, y0, items) => at(x, `<div class="card" style="width:${w}px;height:${h}px">${C(y0, items)}</div>`);
  return `<style>${BASE}:host{display:flex;flex-direction:column;width:675px;height:1176px;border-radius:26px;background:#fefefe;overflow:hidden;font-family:Roboto,sans-serif}
  .card{border-radius:16px;box-shadow:0 3px 6px rgba(0,0,0,.035);flex:none}
  .chip{height:34px;border:1.500px solid #17181c;border-radius:8px;display:flex;align-items:center;justify-content:center}
  .pv{height:26.500px;border-radius:7px;background:#fae5dc;display:flex;align-items:center;padding-left:10px;gap:10px}
  .btn{border-radius:10px;background:#6645b8;display:flex;align-items:center;box-shadow:0 1px 3px rgba(60,30,130,.4)}
  .form{height:1044px;overflow:hidden;flex:none}</style>
  <div style="height:61px;flex:none;padding:24px 0 0 22px">${text(141, 'Nuevo Producto', 19, '#1f2333', 600)}</div>
  <div class="form">` + C(462, [
    [463, 43, at(983, ff(631, 43, 'Nombre del Producto', 109, 'Cafe Morro', 76))],
    [521, 86, at(983, ff(631, 86, 'Descripción', 60, 'cafe morro rico paa tomar', 178, 'area top="12"'))],
    [622, 43, at(983, ff(308, 43, 'Precio ($)', 50, '12.50', 38) + '<div style="width:14px"></div>' + ff(309, 43, 'Unidad', 36, 'unidad', 46))],
    [679, 44, at(983, ff(308, 44, 'Stock', 29, '7', 0) + '<div style="width:14px"></div>' + ff(309, 44, 'Peso (kg)', 48, '1.4', 21))],
    [737, 46, at(983, ff(631, 46, '', 0, 'Categoría', 67, 'arrow="#aaa"'))],
    [797, 46, at(983, ff(631, 46, '', 0, 'Subcategoría', 91, 'arrow="#aaa"'))],
    [862, 104, card(987, 622, 104, 862, [
      Y(885, 18, `<div style="margin-left:14px;display:flex">${title(120, 'Imagen del Producto')}</div>`),
      [908, 44, R(987, [[1001, 152, `<div class="btn" style="width:152px;height:30px">${R(1001, [[1022, 17, '<ui-icon name="file" size="16" color="#fff" sw="2.6"></ui-icon>'], T(1046, 1131, 'Subir Imagen', 14, '#fff')])}</div>`],
        [1168, 428, ff(428, 44, '', 0, 'O pegar URL', 84)]])]])],
    [984, 43, at(983, ff(631, 43, 'Costo de Entrega ($)', 105, '3', 0))],
    [1042, 46, at(983, ff(631, 46, 'Método de Entrega', 97, 'Express (Provincias Limitadas)', 226, 'arrow="#555" size="16.5"'))],
    Y(1124, 20, R(961, [T(998, 1135, 'Producto Disponible', 14, '#2a2e3f'), [1566, 17, '<div style="width:17px;height:17px;border-radius:2px;background:#6645b8;display:flex;align-items:center;justify-content:center"><ui-icon name="check" size="13" color="#fff" sw="2.6"></ui-icon></div>']])),
    [1155, 82, card(1136, 324, 82, 1155, [Y(1176, 18, `<div style="margin-left:11px;display:flex">${title(105, 'Tallas Disponibles')}</div>`),
      [1192, 34, R(1136, [chip(1147, 1194, 'XS', 17), chip(1201, 1239, 'S', 0), chip(1247, 1289, 'M', 0), chip(1296, 1334, 'L', 0), chip(1341, 1387, 'XL', 17), chip(1395, 1450, 'XXL', 26)])]])],
    [1258, 114, card(1029, 538, 114, 1258, [Y(1279, 18, `<div style="margin-left:11px;display:flex">${title(116, 'Colores Disponibles')}</div>`),
      [1294, 34, R(1029, [chip(1040, 1099, 'Rojo', 29), chip(1106, 1164, 'Azul', 28), chip(1171, 1239, 'Verde', 38), chip(1246, 1330, 'Amarillo', 54), chip(1337, 1406, 'Negro', 40), chip(1413, 1487, 'Blanco', 45), chip(1495, 1557, 'Rosa', 33)])],
      [1328, 34, R(1029, [chip(1040, 1120, 'Morado', 50), chip(1127, 1207, 'Naranja', 50), chip(1215, 1270, 'Gris', 26), chip(1277, 1354, 'Marrón', 47)])]])],
    [1393, 118, card(1012, 572, 118, 1393, [Y(1414, 18, `<div style="margin-left:12px;display:flex">${title(132, 'Provincias Disponibles')}</div>`),
      Y(1437, 14, `<div style="margin-left:12px;display:flex">${text(198, 'Express: Selecciona provincias específicas', 10.3, '#757575')}</div>`),
      [1451, 27, R(1012, [pv(1024, 1119, 'Pinar del Río', 51), pv(1123, 1204, 'Artemisa', 37), pv(1208, 1296, 'La Habana', 44), pv(1300, 1391, 'Mayabeque', 48), pv(1395, 1479, 'Matanzas', 41), pv(1483, 1573, 'Cienfuegos', 47)])],
      [1478, 27, R(1012, [pv(1024, 1109, 'Villa Clara', 41), pv(1113, 1216, 'Sancti Spíritus', 60), pv(1220, 1321, 'Ciego de Ávila', 58), pv(1325, 1412, 'Camagüey', 44)])]])]
  ]) + `</div>` +
  R(961, [T(1461, 1518, 'Cancelar', 14, '#6645b8'), [1536, 78, `<div class="btn" style="width:78px;height:29px;justify-content:center">${text(35, 'Crear', 14, '#fff')}</div>`]], 'margin-top:20px');
});
define('device-screen', () => `<style>${BASE}:host{display:flex;position:relative;flex-direction:column;width:930px;height:1241px;border:11px solid #dbdae4;border-radius:33px;background:#757575;overflow:hidden;box-shadow:0 2px 16px rgba(0,0,0,.25);font-family:Roboto,sans-serif;flex:none}
.bar{height:94px;background:#2f2155;border-bottom:1.500px solid #000;flex:none}
.card{width:844px;height:125px;margin:39px 0 0 32px;border-radius:14px;box-shadow:0 2px 4px rgba(0,0,0,.08);flex:none}
.srch{width:300px;height:43px;border:1.500px solid #17181c;border-radius:4px;display:flex;align-items:center}
.new{width:180px;height:29px;border-radius:10px;background:#3a2868;display:flex;align-items:center;justify-content:flex-end;padding-right:21px}
product-dialog{position:absolute;left:117px;top:22px}</style>
<div class="bar">${C(379, [Y(404, 24, R(844, [I(869, 17, 'back', '#8c849c', 2), T(1234, 1356, 'Gestión de Tienda', 15.5, '#75699a', 500)])), Y(451, 20, R(844, [T(905, 980, 'Categorías', 14, '#75699a')]))])}</div>
<div class="card">${C(512, [[520, 43, R(876, [[891, 300, `<div class="srch">${R(892, [I(908, 17, 'search', '#111', 2.6), T(930, 976, 'Buscar', 14, '#15171e')])}</div>`], [1526, 180, `<div class="new">${text(55, 'Producto', 13.5, '#857f92')}</div>`]])],
 Y(600, 20, R(876, [T(891, 972, 'Filtrar por cat', 12.5, '#15171e')]))])}</div>
<product-dialog></product-dialog>`);
define('preview-panel', () => `<style>${BASE}:host{display:flex;flex-direction:column;width:1128px;height:1294px;flex:none;border-right:3px solid #dbdae4;background:#f9f9f9}
.head{height:60px;background:#fdfdfd;border-bottom:3px solid #dbdae4;display:flex;align-items:center;flex:none}
.tab{width:131px;height:42px;border-radius:8px;background:#fff;box-shadow:0 1px 5px rgba(0,0,0,.28);display:flex;align-items:center}
.canvas{position:relative;height:1234px;overflow:hidden;flex:none}
device-screen{margin:-4px 0 0 98px}
.ov{position:absolute;height:54px;border-radius:10px;background:rgba(236,236,238,.62);display:flex;align-items:center}
.tog{width:42px;height:26px;border-radius:13px;background:rgba(222,221,228,.9);display:flex;align-items:center;padding-left:3px}
.tog i{width:22px;height:22px;border-radius:50%;background:#8f8b9b}</style>
<div class="head">${R(735, [[743, 131, `<div class="tab">${R(743, [T(769, 850, 'Preview', 21, '#111', 500)])}</div>`], T(899, 953, 'Code', 21, '#a3a3a3'), T(1002, 1047, 'Split', 21, '#a3a3a3'), I(1754, 23, 'zap', '#a0a0a0', 2), I(1814, 23, 'rotate', '#a0a0a0', 2)])}</div>
<div class="canvas"><device-screen></device-screen>
<div class="ov" style="left:18px;top:16px;width:236px">${R(753, [T(769, 908, 'Inspect Mode', 21, 'rgba(92,92,92,.85)'), [929, 42, '<div class="tog"><i></i></div>']])}</div>
<div class="ov" style="left:267px;top:16px;width:54px;justify-content:center"><ui-icon name="phone" size="26" color="#99969f" sw="2"></ui-icon></div>
<div class="ov" style="left:905px;top:16px;width:204px">${R(1640, [I(1667, 20, 'minus', '#b0adb8', 2.4), T(1714, 1769, '120%', 21, '#111'), I(1817, 20, 'plus', '#a3a3a3', 2.4)])}</div>
<div class="ov" style="left:1050px;top:1158px;width:60px;height:60px;background:#f1f1f1;justify-content:center"><ui-icon name="camera" size="32" color="#a3a3a3" sw="1.900"></ui-icon></div></div>`);

/* ---------- Properties strip ---------- */
define('properties-strip', () => `<style>${BASE}:host{display:flex;flex-direction:column;align-items:center;width:60px;height:1294px;flex:none;border-right:3px solid #dbdae4;background:#f9f9f9;padding-top:20px}
div{writing-mode:vertical-rl;font-size:23px;line-height:28px;letter-spacing:.4px;color:#a3a3a3;font-weight:500;margin-top:17px}</style>
<ui-icon name="pright" size="25" color="#a3a3a3" sw="2"></ui-icon><div>Properties</div>`);

/* ---------- Agent panel ---------- */
define('agent-message', () => {
  const g = '#6f6f6f', ok = x => [x, 26, okBox];
  const b = (x, x2, t) => T(x, x2, t, 22.5, g, 600), r = (x, x2, t) => T(x, x2, t, 22.5, g);
  const L = (cy, ...it) => Y(cy, 30, R(1923, it));
  const h = (cy, x2, t) => L(cy, T(1952, x2, t, 22.5, '#111', 500));
  return `<style>${BASE}:host{display:block;overflow:hidden;height:834px;flex:none}.col .cell{flex:none}.col>.cell{width:957px}</style>` +
  C(434, [
    h(436, 2132, 'EXITOSAMENTE'),
    L(509, [1954, 28, `<svg width="26" height="28" viewBox="0 0 28 28" fill="none"><circle cx="13" cy="14" r="12" stroke="#d33f33" stroke-width="3"/><circle cx="13" cy="14" r="6" stroke="#d33f33" stroke-width="3"/></svg>`], T(1988, 2394, 'IMPLEMENTACIONES REALIZADAS:', 22.5, '#333', 500)),
    h(573, 2659, '1. PANEL DE ADMINISTRACIÓN COMPLETAMENTE OPERATIVO'),
    L(651, ok(1953), b(1989, 2348, 'Gestión completa de productos'), r(2356, 2782, '- Subida de fotos reales con Firebase')),
    L(691, r(1952, 2823, 'Storage, precios, stock, descripciones, tallas, colores, provincias de entrega')),
    L(771, ok(1953), b(1989, 2434, 'Sistema de categorías y subcategorías'), r(2443, 2815, '- Creación, edición y eliminación')),
    L(811, r(1952, 2256, 'con iconos personalizados')),
    L(891, ok(1953), b(1989, 2206, 'Gestión de entrega'), r(2215, 2773, '- Configuración de métodos Express y Barco con')),
    L(931, r(1952, 2357, 'selección de provincias específicas')),
    L(1011, ok(1953), b(1989, 2298, 'Estadísticas en tiempo real'), r(2307, 2772, '- Conteo de categorías, productos, stock')),
    L(1051, r(1952, 2171, 'disponible/agotado')),
    h(1115, 2618, '2. PANTALLA WELCOME/INICIO CON PRODUCTOS REALES'),
    L(1193, ok(1953), b(1989, 2327, 'Productos alimenticios reales'), r(2336, 2816, '- Ahora muestra productos de Firebase en')),
    L(1233, r(1952, 2185, 'lugar de datos demo'), ok(2193), b(2229, 2477, 'Categorías dinámicas'), r(2486, 2834, '- Carga las categorías creadas'))
  ]);
});
define('agent-panel', () => `<style>${BASE}:host{display:flex;flex-direction:column;position:relative;width:957px;height:1294px;flex:none;background:#f9f9f9}
.head{height:60px;background:#fdfdfd;border-bottom:3px solid #dbdae4;display:flex;flex:none}
.sub{height:62px;border-bottom:2px solid #dbdae4;display:flex;flex:none}
.pin{position:absolute;left:9px;top:134px;width:936px;height:74px;border-radius:8px;background:rgba(255,255,255,.96);box-shadow:0 2px 6px rgba(0,0,0,.25),0 14px 34px rgba(0,0,0,.16);display:flex;align-items:center}
.av{width:28px;height:28px;border-radius:50%;background:#f8f8f8;box-shadow:0 1px 5px rgba(0,0,0,.25);display:flex;align-items:center;justify-content:center}
.tag{width:166px;height:42px;border:2px solid #dbdae4;border-radius:8px;background:#fdfdfd;display:flex;align-items:center}
.in{width:920px;height:248px;border-radius:18px;background:#fdfdfd;box-shadow:0 1px 5px rgba(0,0,0,.28),0 8px 22px rgba(0,0,0,.12);margin-left:17px}
.b{width:48px;height:48px;border-radius:8px;display:flex;align-items:center;justify-content:center}</style>
<div class="head">${R(1923, [T(1941, 2008, 'Agent', 22, '#6f6f6f', 500), T(2534, 2660, 'New Thread', 21, '#6f6f6f', 500), V(2682, 33), T(2707, 2792, 'Threads', 21, '#6f6f6f', 500), V(2814, 33), I(2850, 18, 'x', '#adadad', 2.4)])}</div>
<div class="sub">${R(1923, [T(1937, 2353, 'Implement product management system', 21, '#6f6f6f'), I(2549, 18, 'up', '#a3a3a3', 2.6), T(2583, 2692, '292 of 292', 20.5, '#a8a8a8'), I(2726, 18, 'down', '#a3a3a3', 2.6), V(2756, 32), I(2788, 20, 'dbl', '#a3a3a3', 2.4), V(2818, 32), I(2850, 20, 'arrowdown', '#8c8c8c', 2.4)])}</div>
<agent-message></agent-message>
<div class="pin">${R(1932, [[1960, 28, `<div class="av">${brand(13, '#d2393d', '#fff', '#777')}</div>`], T(2000, 2841, 'ahora nesecito implemetes todo ya (sin demo) boy a empessar a subir fotos de product...', 20, '#757575')])}</div>
${C(1268, [
  [1281, 42, R(1923, [I(1964, 22, 'plus', '#b5b5b5', 2.4), [2000, 166, `<div class="tag">${R(2002, [I(2024, 23, 'comp', '#6a6cd6', 2), T(2047, 2124, 'AppBar', 21.5, '#6f6f6f'), I(2144, 14, 'x', '#757575', 2.6)])}</div>`]])],
  [1338, 248, `<div class="in">${C(1338, [Y(1380, 30, R(1940, [T(1965, 2265, 'Ask, plan, search, build...', 22.5, '#a3a3a3')])),
    [1518, 48, R(1940, [[1960, 48, '<div class="b" style="border:2px solid #dcdce0"><ui-icon name="image" size="29" color="#757575"></ui-icon></div>'], [2792, 48, '<div class="b" style="background:#f2f2f2"><ui-icon name="arrowup" size="22" color="#6f6f6f" sw="2.4"></ui-icon></div>']])]])}</div>`]])}`);

/* ---------- Status bar ---------- */
define('status-bar', () => `<style>${BASE}:host{display:flex;height:76px;flex:none;border-top:3px solid #dbdae4;align-items:center;background:linear-gradient(90deg,#f9f9f9 120px,rgba(249,249,249,0) 400px,rgba(249,249,249,0) 2480px,#f9f9f9 2730px),linear-gradient(#f9f9f9,#f1f1f1 45%,#dadada)}
.ok{width:17px;height:17px;background:#629c57;box-shadow:0 0 10px 3px rgba(120,190,110,.3)}</style>` +
R(0, [I(32, 24, 'branch', '#a3a3a3'), T(60, 112, 'main', 21.5, '#a3a3a3'), V(146, 32, 3), I(191, 23, 'refresh', '#a3a3a3', 2.2), T(219, 447, 'Refresh Dependencies', 21, '#a3a3a3'), V(480, 32, 3),
  T(515, 674, 'Preview Status:', 21, '#a3a3a3'), [686, 17, '<div class="dot ok"></div>'], T(716, 800, 'Running', 21, '#6f6f6f'), I(830, 21, 'refresh', '#a3a3a3', 2.2),
  I(2384, 21, 'alert', '#a3a3a3', 2.2), T(2410, 2494, '0 Issues', 21, '#a3a3a3'), I(2536, 22, 'warn', '#d9935f', 2.2), T(2562, 2690, '63 Warnings', 21, '#a3a3a3'), I(2732, 21, 'info', '#5f61cf', 2.2), T(2757, 2848, '125 Infos', 21, '#a3a3a3')]));

define('browser-window', () => `<style>:host{display:flex;flex-direction:column;height:1634px;flex:none;border-top:2px solid #5d707d;border-radius:20px 20px 22px 22px;overflow:hidden;box-sizing:border-box;background:#d6e1fb}
.main{display:flex;height:1294px;flex:none}</style>
<browser-tabs></browser-tabs><browser-toolbar></browser-toolbar><flow-toolbar></flow-toolbar>
<div class="main"><icon-rail></icon-rail><supabase-panel></supabase-panel><preview-panel></preview-panel><properties-strip></properties-strip><agent-panel></agent-panel></div>
<status-bar></status-bar>`);

/* ---------- Dock ---------- */
const lg = (id, c1, c2, x2 = 0, y2 = 1) => `<linearGradient id="${id}" x2="${x2}" y2="${y2}"><stop stop-color="${c1}"/><stop offset="1" stop-color="${c2}"/></linearGradient>`;
const tile = (fill, body = '') => `<rect width="66" height="67" rx="15" fill="${fill}"/>${body}`;
const APPS = {
  finder: lg('a', '#5fc6f8', '#3a70ea') + tile('url(#a)', `<path d="M36 0h15a15 15 0 0 1 15 15v37a15 15 0 0 1-15 15H41c-1-9-2-17-1.500-27H29C29 26 32 12 36 0z" fill="#e6ebf1"/><path d="M18 19v6M49 19v6M13 44c11 12 30 12 40 0" stroke="#1c2b3d" stroke-width="2.500" fill="none" stroke-linecap="round"/><path d="M36 0C32 12 29 26 29 40h10" fill="none" stroke="#9db7d2"/>`),
  launch: tile('#d5cfe0', ['#7fd65a', '#f1a43a', '#ee9a35', '#cf3b35', '#aaadb3', '#ec4a5b', '#9c4bd8', '#3f8cf2', '#52c7b9'].map((c, i) => `<rect x="${10 + i % 3 * 16.500}" y="${11 + (i / 3 | 0) * 16.500}" width="12.500" height="12.500" rx="3" fill="${c}"/>`).join('')),
  firefox: lg('a', '#fbe14c', '#e63a5f', .3) + tile('#1c1238', `<path d="M41 3c8 8 9 14 9 17 2 1 3-1 3-2 6 9 9 18 7 25C57 55 46 63 33 63 17 63 5 52 6 36c0-9 4-16 5-21l5 8 5-6c0 4 3 7 7 7 5 0 8 0 8-3C34 14 37 8 41 3z" fill="url(#a)"/><circle cx="33" cy="36" r="13" fill="#7542d8"/><path d="M11 27c8-2 12 3 19 2-3 5-9 5-10 12-6-1-9-8-9-14z" fill="#f59a35"/>`),
  chrome: tile('#fafafa', `<circle cx="33" cy="33.500" r="28" fill="#4f9a58"/><path d="M33 33.500 8.800 19.500A28 28 0 0 1 57.300 19.500z" fill="#d04a3e"/><path d="M33 33.500 57.300 19.500A28 28 0 0 1 33 61.500z" fill="#f0bd4a"/><path d="M33 20h24.500L46 40 33 61.500z" fill="#f0bd4a"/><circle cx="33" cy="33.500" r="14" fill="#fff"/><circle cx="33" cy="33.500" r="11" fill="#4a86ee"/>`),
  safari: tile('#eceef0', `<circle cx="33" cy="33.500" r="29" fill="#3a8de8"/><circle cx="33" cy="33.500" r="25" fill="none" stroke="#bcdcf8" stroke-width="4" stroke-dasharray="1 2.500"/><path d="M54 14 36.500 36.500 29.500 30.500z" fill="#e5493d"/><path d="M12 53 36.500 36.500 29.500 30.500z" fill="#f4f6f8"/>`),
  messages: lg('a', '#8cf281', '#52c24a') + tile('url(#a)', `<ellipse cx="33" cy="31" rx="24" ry="20" fill="#effbee"/><path d="M18 45c1 5-1 8-4 10 6 0 9-2 11-6z" fill="#effbee"/>`),
  mail: lg('a', '#3a72ee', '#5fc4fa') + tile('url(#a)', `<rect x="10" y="18" width="46" height="31" rx="4" fill="#f2f3f5"/><path d="m11 20 22 18 22-18M12 48l15-15M54 48 39 33" fill="none" stroke="#a8acb3" stroke-width="1.800"/>`),
  maps: `<clipPath id="c"><rect width="66" height="67" rx="15"/></clipPath><g clip-path="url(#c)"><rect width="66" height="67" fill="#f2efe8"/><path d="M28 0h38v67H40z" fill="#8dd769"/><path d="M33-4a40 40 0 0 0 36 40" stroke="#f5f3ee" stroke-width="9" fill="none"/><path d="M-4 16 66 64v14L-4 32z" fill="#f8d34f"/><path d="M0 40 12 44v23H0z" fill="#eab6c5"/><path d="M16 0v70" stroke="#fff" stroke-width="13"/><path d="M16 0v34" stroke="#3d84ec" stroke-width="8"/><circle cx="16" cy="40" r="12" fill="#fff"/><circle cx="16" cy="40" r="8.500" fill="#3d84ec"/><path d="M37 43h24l1 10c0 6-7 10-13 11-6-1-13-5-13-11z" fill="#3569c9" stroke="#fff" stroke-width="1.500"/><path d="M38 43h22v5H38z" fill="#d8443c"/><text x="49" y="58" font-size="10" font-weight="700" fill="#fff" text-anchor="middle">280</text></g>`,
  photos: tile('#fcfcfc', ['#f09a38', '#f3dc4c', '#a9cf59', '#69b884', '#5da4dd', '#8a7cc7', '#c969a5', '#e8584e'].map((c, i) => `<ellipse cx="33" cy="18.500" rx="9" ry="13.500" fill="${c}" opacity=".85" transform="rotate(${i * 45} 33 33.500)"/>`).join('')),
  facetime: lg('a', '#8cf281', '#4bbd43') + tile('url(#a)', `<rect x="9" y="19" width="33" height="30" rx="8" fill="#eefaed"/><path d="m45 30 10-7v22l-10-7z" fill="#d4f2d2"/>`),
  cal: `<clipPath id="c"><rect width="66" height="67" rx="15"/></clipPath><g clip-path="url(#c)"><rect width="66" height="67" fill="#fafafa"/><rect width="66" height="21" fill="#e35d54"/><text x="33" y="16" font-size="13" font-weight="700" fill="#fff" text-anchor="middle">AGO.</text><text x="33" y="57" font-size="40" fill="#222" text-anchor="middle" font-weight="300" textLength="46">22</text></g>`,
  contacts: `<path d="M60 12h8v8h-8z" fill="#bbb"/><path d="M60 24h9v10h-9z" fill="#5b9fd8"/><path d="M60 37h9v9h-9z" fill="#e5953f"/><path d="M60 49h9v9h-9z" fill="#5cb36b"/>` + tile('#a88551', `<circle cx="34" cy="33" r="21" fill="#9b7845" stroke="#8a693a" stroke-width="1.500"/><circle cx="34" cy="27" r="8" fill="#8a693a"/><path d="M18 46c6-11 26-11 32 0-8 11-24 11-32 0z" fill="#8a693a"/>`),
  reminders: tile('#fbfbfb', ['#3a7bea', '#dd4b3f', '#ea9a3b'].map((c, i) => `<circle cx="13" cy="${17 + i * 16.500}" r="5" fill="#fff" stroke="${c}" stroke-width="1.500"/><circle cx="13" cy="${17 + i * 16.500}" r="3" fill="${c}"/><path d="M25 ${17 + i * 16.500}h35" stroke="#bbb" stroke-width="2"/>`).join('')),
  notes: `<clipPath id="c"><rect width="66" height="67" rx="15"/></clipPath><g clip-path="url(#c)"><rect width="66" height="67" fill="#f3f2ef"/><rect width="66" height="17" fill="#f6c843"/><path d="M0 18h66M0 34h66M0 51h66" stroke="#cbcac6" stroke-width="1.500"/></g>`,
  tv: tile('#16201f', `<g transform="translate(7 20) scale(.98)"><path fill="#fff" d="${APPLE}"/></g><text x="30" y="43" font-size="27" fill="#fff" font-weight="500">tv</text>`),
  music: lg('a', '#ee5f70', '#e63a48') + tile('url(#a)', `<path d="M24 49V20l24-6v29" fill="none" stroke="#fff" stroke-width="4"/><path d="M24 19l24-6v7l-24 6z" fill="#fff"/><ellipse cx="19" cy="50" rx="7" ry="5.500" fill="#fff"/><ellipse cx="43" cy="45" rx="7" ry="5.500" fill="#fff"/>`),
  keynote: tile('#fcfcfc', `<path d="M0 18h66M0 34h66M0 50h66M18 0v67M48 0v67" stroke="#d7e5f4"/><path d="M17 7h32l4 21H12z" fill="#2f7fe0"/><path d="M19 10h28l3 14H16z" fill="#dff0fb"/><circle cx="33" cy="17" r="6" fill="#54b86a"/><path d="M33 17v-6a6 6 0 0 1 5 9z" fill="#ee9a3b"/><path d="M33 28v30M22 59h22" stroke="#8d9399" stroke-width="3"/>`),
  numbers: tile('#fcfcfc', `<path d="M0 14h66M0 27h66M0 40h66M14 0v67M27 0v67M40 0v67" stroke="#d8eed6"/><path d="M12 36h10v22H12z" fill="#d8433d"/><path d="M23.500 23h10v35h-10z" fill="#ee9838"/><path d="M34.500 9h10v49h-10z" fill="#57c33f"/><path d="M45.500 16h10v42h-10z" fill="#3d8ceb"/>`),
  flutter: tile('#463be0', `<path d="M25 13h29l-4 8H37l-2 10h15l-6 9H30l-4 10-10 3 4-22z" fill="none" stroke="#fff" stroke-width="3" stroke-linejoin="round"/><path d="M25 13l12 8M20 31l10 9" stroke="#fff" stroke-width="2.500"/>`),
  podcasts: lg('a', '#bb66ea', '#7a2fb8') + tile('url(#a)', `<g fill="none" stroke="#fff" stroke-width="3"><path d="M20 51a22 22 0 1 1 26 0"/><path d="M25 40a13 13 0 1 1 16 0"/></g><circle cx="33" cy="30" r="5.500" fill="#fff"/><path d="M27 42c0-6 12-6 12 0l-3 16c-1 3-5 3-6 0z" fill="#fff"/>`),
  pages: tile('#fcfcfb', `<path d="M8 15h48M8 31h48M8 43h48M8 55h48" stroke="#f3dcc0" stroke-width="1.500"/><text x="6" y="41" font-size="44" font-weight="700" fill="#eea03c" font-family="Liberation Serif,serif">“</text><path d="M46 6l7 3-21 38-6-2z" fill="#f0982f"/><path d="M32 47l-6-2-6 16z" fill="#333"/>`),
  store: lg('a', '#54b5f8', '#2d6be0') + tile('url(#a)', `<path d="M36 14 17 50M31 14l18 37M11 41h44" stroke="#fff" stroke-width="5.500" stroke-linecap="round"/>`),
  settings: tile('#a9adaf', `<circle cx="33" cy="33.500" r="28" fill="#2f3133"/><circle cx="33" cy="33.500" r="25" fill="none" stroke="#8b8f92" stroke-width="4" stroke-dasharray="2 1.500"/><circle cx="33" cy="33.500" r="19" fill="none" stroke="#b3b6b8" stroke-width="4"/><path d="M33 33.500 16 33.500M33 33.500l9-15M33 33.500l9 15" stroke="#b3b6b8" stroke-width="4"/><circle cx="33" cy="33.500" r="6" fill="#55585b"/>`),
  w: tile('#f6f2ec', `<path d="M8 19h8c5 0 4 8 6 14 1 4 2 5 3 1l3-11c1-4 3-4 8-4 4 0 4 4 5 9 2 8 3 9 5 2 2-8 3-11 7-11h6c-1 3-3 4-4 8l-5 16c-2 6-8 6-11 0-2-4-2-8-3-11l-3 11c-2 6-8 6-11 0-3-5-6-21-14-24z" fill="#111"/>`),
  preview: tile('#f4f5f6', `<rect x="5" y="5" width="56" height="57" rx="8" fill="#2d4a7c"/><path d="M5 13a8 8 0 0 1 8-8h40a8 8 0 0 1 8 8v22H5z" fill="#9bbcf0"/><path d="M5 50q15-12 30-4v16H13a8 8 0 0 1-8-8z" fill="#8a7a6a"/><rect x="33" y="32" width="29" height="15" rx="4" fill="#1b1c1e"/><path d="M35 47h25l5 18a6 6 0 0 1-5 5H35a6 6 0 0 1-5-5z" fill="#c6ccd0"/><circle cx="47" cy="58" r="7" fill="#5d6a74"/>`),
  orange: tile('#e9a14e', `<rect x="17" y="15" width="32" height="36" rx="6" fill="none" stroke="#111" stroke-width="2.500"/><path d="M31 10c2 4 0 6 3 10-6 6-6 19 0 25 3 4 1 8-1 11-3-6-10-8-14-14-6-7-3-16 3-21 4-3 8-5 9-11z" fill="#fff"/><path d="M33 10c2 6 8 8 12 12 5 6 8 14 3 21-4 5-9 7-11 13-3-5-3-9 1-13 4-6 4-15-2-22-4-4-4-7-3-11z" fill="#fff"/><circle cx="54" cy="23" r="1.800" fill="#fff"/>`)
};
define('dock-icon', el => {
  const b = a(el, 'badge');
  return `<style>:host{display:flex;flex-direction:column;align-items:center;width:66px;height:90px;position:relative;flex:none;filter:drop-shadow(0 1px 2px rgba(0,0,0,.25))}svg{display:block;overflow:visible;font-family:Inter,sans-serif}
  i{width:8px;height:8px;border-radius:50%;background:${a(el, 'run')};margin-top:11px}
  b{position:absolute;top:-9px;right:-11px;min-width:32px;height:32px;padding:0 4px;box-sizing:border-box;border-radius:16px;background:#eb5545;color:#fff;font:400 21px/32px Inter,sans-serif;text-align:center;letter-spacing:-1px}</style>
  <svg width="66" height="67" viewBox="0 0 66 67">${APPS[a(el, 'app')]}</svg>${a(el, 'run') ? '<i></i>' : ''}${b ? `<b>${b}</b>` : ''}`;
});
define('mac-dock', () => {
  const names = ['finder', 'launch', 'firefox', 'chrome', 'safari', 'messages', 'mail', 'maps', 'photos', 'facetime', 'cal', 'contacts', 'reminders', 'notes', 'tv', 'music', 'keynote', 'numbers', 'flutter', 'podcasts', 'pages', 'store', 'settings'];
  const badge = { 5: '8', 6: '2,079', 9: '1', 21: '14', 22: '1' }, run = { 0: '#160a26', 2: '#160a26', 3: '#160a26', 6: '#6b1a14', 13: '#6b1a14' };
  const ic = (x, n, i) => [x, 66, `<dock-icon app="${n}" ${badge[i] ? `badge="${badge[i]}"` : ''} ${run[i] ? `run="${run[i]}"` : ''}></dock-icon>`];
  return `<style>${BASE}:host{display:flex;width:2555px;height:106px;border-radius:30px;border:2px solid rgba(255,255,255,.28);background:linear-gradient(90deg,#82659a,#8b69a2 13%,#a9759c 16.500%,#dc8d93 20%,#e1918a 26%,#dd8e7e 35%,#ec9b7f 54%,#d99779 62%,#a38a86 66%,#747088 71%,#7a6f86 75%,#9f728c 80%,#8b5b7f 84%,#86567e 90%,#8b5b80 95%,#b1828c);padding-top:14px}
  .row{align-items:flex-start;height:90px}.cell{align-items:flex-start}</style>` +
  R(165, [...names.map((n, i) => ic(179 + 88 * i, n, i)), V(2212, 78, 2, 'rgba(60,35,70,.6)'), ic(2243, 'w'), ic(2332, 'preview'), ic(2420, 'orange'), V(2516, 78, 2, 'rgba(60,20,60,.6)'),
    [2541, 80, `<svg width="80" height="60" viewBox="0 0 80 60" style="margin-top:12px"><rect width="80" height="44" fill="#f3f3f4"/><path d="M3 4h24M3 8h20M3 12h24M3 16h22M3 20h24M3 24h20M3 28h24M3 34h22" stroke="#b9b9bd"/><path d="M34 6h20M34 30h18M38 18h14" stroke="#999" stroke-width="1.500"/><path d="M56 18l20-2v12l-20 2z" fill="#d94862"/><rect x="52" y="35" width="24" height="24" rx="6" fill="#3f9bf0"/><rect x="56" y="41" width="16" height="11" rx="1.500" fill="#f2f3f5"/><path d="m56 42 8 6 8-6" fill="none" stroke="#aaa"/></svg>`],
    [2638, 60, `<svg width="60" height="76" viewBox="0 0 60 76" style="margin-top:-3px"><defs><linearGradient id="t"><stop stop-color="#cfd0d5"/><stop offset=".4" stop-color="#eceded"/><stop offset="1" stop-color="#c8cacf"/></linearGradient></defs><path d="M1 8 8 68c1 9 43 9 44 0L59 8z" fill="url(#t)"/><ellipse cx="30" cy="8" rx="29" ry="7.500" fill="#c5abb8" stroke="#e7e4e8" stroke-width="1.500"/></svg>`]
  ]);
});

define('mac-desktop', () => `<style>:host{display:flex;flex-direction:column;width:2880px;height:1800px;overflow:hidden;position:relative;background:#5d707d}
.bottom{position:relative;height:118px;flex:none;padding:2px 0 0 163px;box-sizing:border-box}
.corner{position:absolute;left:0;bottom:0;z-index:-1}
.stage{position:relative;z-index:0;display:flex;flex-direction:column}</style>
<mac-menubar></mac-menubar><div class="stage">
<svg class="corner" width="2880" height="150" viewBox="0 -32 2880 150"><defs><linearGradient id="p" x2="0" y2="1"><stop stop-color="#271433"/><stop offset="1" stop-color="#432665"/></linearGradient></defs><rect y="-32" width="2880" height="150" fill="#2f062a"/>
<path d="M0-32h700L455 118H0z" fill="url(#p)"/><path d="M490 105h40l-40 13h-35z" fill="#150c1c"/><path d="M700-32h1480L1780 118H490z" fill="#c77a76"/>
<path d="M1500-32h500l-220 150h-500z" fill="#d08c72"/><path d="M1782 105h480l-60 13H1770z" fill="#46244f"/><path d="M1862 105h40l14 13h-40zM1990 105h20l8 13h-26z" fill="#122331"/><path d="M1900 105h14l24 13h-16zM2046 105h10l-2 13h-10zM2126 105h12l-4 13h-8z" fill="#3d7a74"/><path d="M2056 105h66l-2 13h-66z" fill="#12284a"/>
<path d="M2630-32h84l4 70 44 80h-88l-10-40z" fill="#d99b78"/><path d="M2716 40l64 78h-26z" fill="#5b4d78"/></svg>
<browser-window></browser-window><div class="bottom"><mac-dock></mac-dock></div></div>`);
</script>
</body>
</html>
